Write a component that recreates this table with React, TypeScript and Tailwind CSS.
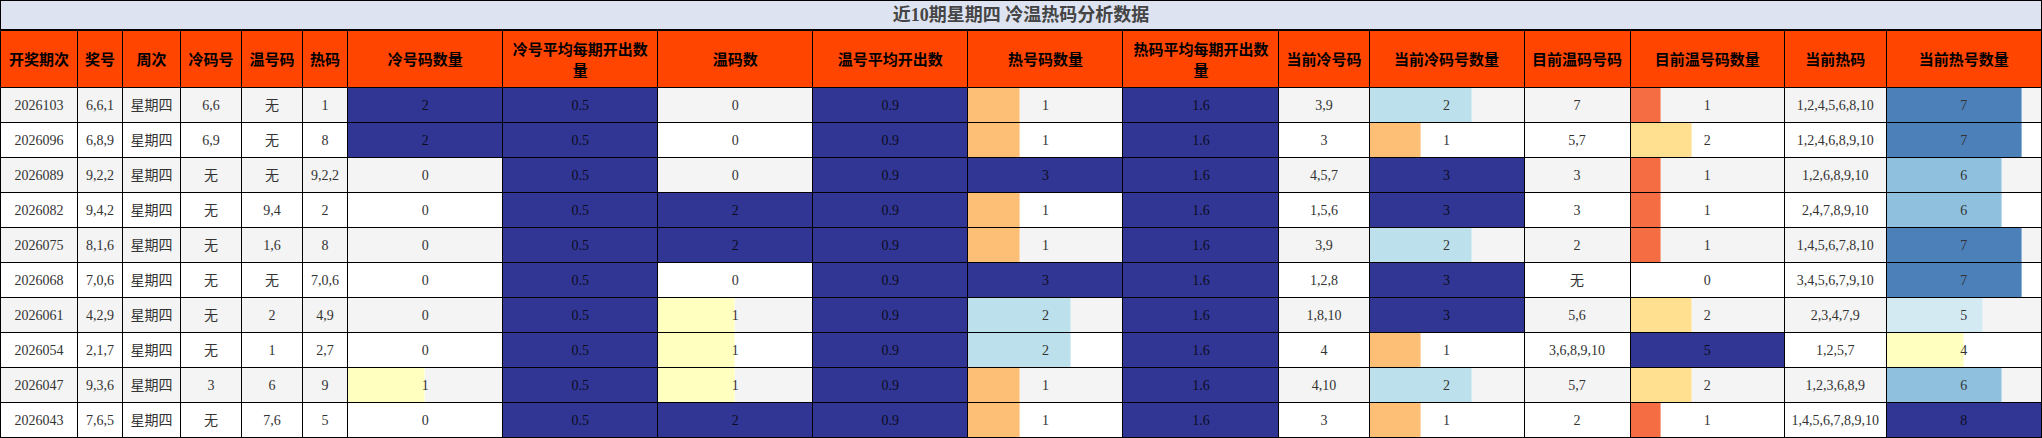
import React from 'react'

type Cell = string | number

// widths of the 18 columns, px
const widths = [77, 45, 58, 61, 61, 45, 155, 155, 155, 155, 155, 156, 90, 155, 106, 154, 102, 155]

const headers: React.ReactNode[] = [
  '开奖期次',
  '奖号',
  '周次',
  '冷码号',
  '温号码',
  '热码',
  '冷号码数量',
  <>冷号平均每期开出数<br />量</>,
  '温码数',
  '温号平均开出数',
  '热号码数量',
  <>热码平均每期开出数<br />量</>,
  '当前冷号码',
  '当前冷码号数量',
  '目前温码号码',
  '目前温号码数量',
  '当前热码',
  '当前热号数量',
]

// column index -> max value for the data bar
const barMax: Record<number, number> = { 6: 2, 7: 0.5, 8: 2, 9: 0.9, 10: 3, 11: 1.6, 13: 3, 15: 5, 17: 8 }

const rows: Cell[][] = [
  ['2026103', '6,6,1', '星期四', '6,6', '无', '1', 2, 0.5, 0, 0.9, 1, 1.6, '3,9', 2, '7', 1, '1,2,4,5,6,8,10', 7],
  ['2026096', '6,8,9', '星期四', '6,9', '无', '8', 2, 0.5, 0, 0.9, 1, 1.6, '3', 1, '5,7', 2, '1,2,4,6,8,9,10', 7],
  ['2026089', '9,2,2', '星期四', '无', '无', '9,2,2', 0, 0.5, 0, 0.9, 3, 1.6, '4,5,7', 3, '3', 1, '1,2,6,8,9,10', 6],
  ['2026082', '9,4,2', '星期四', '无', '9,4', '2', 0, 0.5, 2, 0.9, 1, 1.6, '1,5,6', 3, '3', 1, '2,4,7,8,9,10', 6],
  ['2026075', '8,1,6', '星期四', '无', '1,6', '8', 0, 0.5, 2, 0.9, 1, 1.6, '3,9', 2, '2', 1, '1,4,5,6,7,8,10', 7],
  ['2026068', '7,0,6', '星期四', '无', '无', '7,0,6', 0, 0.5, 0, 0.9, 3, 1.6, '1,2,8', 3, '无', 0, '3,4,5,6,7,9,10', 7],
  ['2026061', '4,2,9', '星期四', '无', '2', '4,9', 0, 0.5, 1, 0.9, 2, 1.6, '1,8,10', 3, '5,6', 2, '2,3,4,7,9', 5],
  ['2026054', '2,1,7', '星期四', '无', '1', '2,7', 0, 0.5, 1, 0.9, 2, 1.6, '4', 1, '3,6,8,9,10', 5, '1,2,5,7', 4],
  ['2026047', '9,3,6', '星期四', '3', '6', '9', 1, 0.5, 1, 0.9, 1, 1.6, '4,10', 2, '5,7', 2, '1,2,3,6,8,9', 6],
  ['2026043', '7,6,5', '星期四', '无', '7,6', '5', 0, 0.5, 2, 0.9, 1, 1.6, '3', 1, '2', 1, '1,4,5,6,7,8,9,10', 8],
]

function barColor(r: number) {
  if (r >= 0.99) return 'bg-[#313695]'
  if (r >= 0.85) return 'bg-[#4c80b9]'
  if (r >= 0.7) return 'bg-[#8fc1de]'
  if (r >= 0.65) return 'bg-[#bde1ec]'
  if (r >= 0.6) return 'bg-[#d3eaf3]'
  if (r >= 0.45) return 'bg-[#ffffc0]'
  if (r >= 0.38) return 'bg-[#fee090]'
  if (r >= 0.3) return 'bg-[#fdbf75]'
  return 'bg-[#f46d43]'
}

function DataCell({ value, col }: { value: Cell; col: number }) {
  const max = barMax[col]
  if (max === undefined || typeof value !== 'number') {
    return <td className="border border-black p-0 text-center whitespace-nowrap">{value}</td>
  }
  const r = value / max
  const full = r >= 0.99
  return (
    <td className="relative border border-black p-0 text-center">
      {r > 0 ? (
        <div
          className={`absolute inset-y-0 left-0 ${barColor(r)} ${full ? '' : 'border-r border-white/40'}`}
          style={{ width: `${Math.min(r, 1) * 100}%` }}
        />
      ) : null}
      <span className={`relative ${full ? 'text-[#0d0d20]' : ''}`}>{value}</span>
    </td>
  )
}

export default function App() {
  return (
    <div className="w-[2042px] bg-white">
      <table className="w-[2042px] table-fixed border-collapse">
        <colgroup>
          {widths.map((w, i) => (
            <col key={i} style={{ width: w }} />
          ))}
        </colgroup>
        <thead>
          <tr className="h-[29px]">
            <th
              colSpan={18}
              className="border border-b-2 border-black bg-[#dde3f1] p-0 text-center text-[18px] font-bold leading-none text-[#454545] [font-family:'Liberation_Serif','Noto_Sans_CJK_SC',serif]"
            >
              近10期星期四 冷温热码分析数据
            </th>
          </tr>
          <tr className="h-[58px]">
            {headers.map((h, i) => (
              <th
                key={i}
                className="border border-black bg-[#ff4500] p-0 text-center text-[15px] font-bold leading-[21px] text-black [font-family:'Noto_Sans_CJK_SC',sans-serif]"
              >
                {h}
              </th>
            ))}
          </tr>
        </thead>
        <tbody className="text-[14px] text-[#333] [font-family:'Liberation_Serif','Noto_Sans_CJK_SC',serif]">
          {rows.map((row, ri) => (
            <tr key={ri} className={`h-[35px] ${ri % 2 === 0 ? 'bg-[#f4f4f4]' : 'bg-white'}`}>
              {row.map((v, ci) => (
                <DataCell key={ci} value={v} col={ci} />
              ))}
            </tr>
          ))}
        </tbody>
      </table>
    </div>
  )
}
